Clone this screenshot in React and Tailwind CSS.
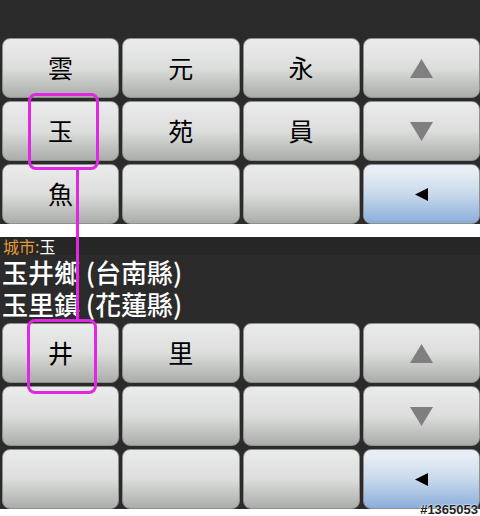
import React from "react";

const FONT = '"Noto Sans CJK TC", "Noto Sans CJK SC", sans-serif';

const Up = () => (
  <svg width="23" height="19" viewBox="0 0 23 19">
    <polygon points="11.5,0 23,19 0,19" fill="#7f7f7f" />
  </svg>
);

const Down = () => (
  <svg width="23" height="19" viewBox="0 0 23 19">
    <polygon points="0,0 23,0 11.5,19" fill="#7f7f7f" />
  </svg>
);

const Back = () => (
  <svg width="13" height="13" viewBox="0 0 13 13">
    <polygon points="0,6.5 13,0 13,13" fill="#000" />
  </svg>
);

const Key = ({ children, blue = false }) => (
  <div
    className={`h-[60px] rounded-[8px] flex items-center justify-center text-[25px] text-black border border-[#8e908e] ${
      blue
        ? "bg-linear-to-b from-[#e8eef5] from-10% via-[#c9d9eb] via-50% to-[#8aaedb]"
        : "bg-linear-to-b from-[#e9eaea] from-5% via-[#dcdedc] via-50% to-[#abadaa]"
    }`}
  >
    {children}
  </div>
);

const Keypad = ({ keys }) => (
  <div className="grid grid-cols-4 gap-x-[3px] gap-y-[3px] pl-[2px]">
    {keys.map((k, i) => (
      <Key key={i} blue={k === "back"}>
        {k === "up" ? <Up /> : k === "down" ? <Down /> : k === "back" ? <Back /> : k}
      </Key>
    ))}
  </div>
);

export default function App() {
  return (
    <div
      className="relative w-[480px] h-[516px] bg-white overflow-hidden"
      style={{ fontFamily: FONT }}
    >
      {/* 上方鍵盤 */}
      <div className="bg-[#2b2b2b] pt-[38px]">
        <Keypad keys={["雲", "元", "永", "up", "玉", "苑", "員", "down", "魚", "", "", "back"]} />
      </div>

      <div className="h-[13px]" />

      {/* 城市列 */}
      <div className="h-[18px] bg-[#262626] flex items-center pl-[3px] text-[16px] leading-none">
        <span className="text-[#e09a3a]">城市:</span>
        <span className="text-white">玉</span>
      </div>

      {/* 結果清單 */}
      <div className="bg-[#2b2b2b] text-white text-[26px] font-medium leading-[32px] pt-[1px] pl-[2px] h-[66px]">
        <div>玉井鄉 (台南縣)</div>
        <div>玉里鎮 (花蓮縣)</div>
      </div>

      {/* 下方鍵盤 */}
      <div className="bg-[#2b2b2b] pt-[2px]">
        <Keypad keys={["井", "里", "", "up", "", "", "", "down", "", "", "", "back"]} />
      </div>

      {/* 標註 */}
      <div className="absolute left-[28px] top-[93px] w-[71px] h-[77px] border-[3px] border-[#e028e0] rounded-[8px]" />
      <div className="absolute left-[76px] top-[170px] w-[3px] h-[150px] bg-[#e028e0]" />
      <div className="absolute left-[27px] top-[319px] w-[70px] h-[75px] border-[3px] border-[#e028e0] rounded-[8px]" />

      <div
        className="absolute right-[2px] bottom-[0px] text-[13px] leading-none text-[#222] font-bold"
        style={{ fontFamily: '"Liberation Sans", sans-serif', textShadow: "0 0 2px #fff, 0 0 2px #fff" }}
      >
        #1365053
      </div>
    </div>
  );
}
